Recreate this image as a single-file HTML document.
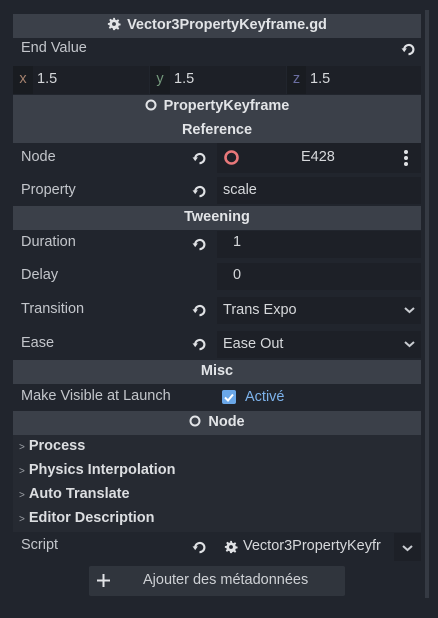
<!DOCTYPE html>
<html><head><meta charset="utf-8"><style>
*{margin:0;padding:0;box-sizing:border-box}
body{width:438px;height:618px;background:#21252d;font-family:"Liberation Sans","DejaVu Sans",sans-serif;font-size:14.5px;color:#cdd0d5;position:relative;overflow:hidden}
.a{position:absolute}
.hdr{position:absolute;left:13px;width:408px;height:24px;background:#3b4049;color:#e2e4e7;font-weight:bold;text-align:center;line-height:23px;font-size:14.5px}
.lbl{position:absolute;left:21px;color:#c3c6cb}
.fld{position:absolute;left:217px;width:204px;background:#1d2027}
.rv{position:absolute;left:192px}
.chev{position:absolute;left:404px}
</style></head><body>
<div class="a" style="left:425px;top:10px;width:4px;height:588px;background:#353a43"></div>

<div class="hdr" style="top:14px"><svg width="14" height="14" viewBox="0 0 16 16" style="vertical-align:-2px;margin-right:6px"><path fill="#e2e4e7" d="M7 1h2l.4 2 1.5.7 1.7-1.2 1.4 1.4-1.2 1.7.7 1.5 2 .4v2l-2 .4-.7 1.5 1.2 1.7-1.4 1.4-1.7-1.2-1.5.7L9 15H7l-.4-2-1.5-.7-1.7 1.2-1.4-1.4 1.2-1.7L2.5 9 1 9V7l2-.4.7-1.5-1.2-1.7 1.4-1.4 1.7 1.2L7.1 3z"/><circle cx="8" cy="8" r="2.2" fill="#3b4049"/></svg>Vector3PropertyKeyframe.gd</div>

<div class="lbl" style="top:40px">End Value</div>
<svg class="a" style="left:401px;top:42px" width="15" height="15" viewBox="0 0 14 14"><path d="M3 6.5A4.3 4.3 0 1 1 7 11.3" fill="none" stroke="#dfe1e4" stroke-width="2"/><path d="M0.5 6l5 0-2.5 3.5z" fill="#dfe1e4"/></svg>

<div class="a" style="left:13px;top:66px;width:136px;height:28px;background:#1d2027"></div>
<div class="a" style="left:13px;top:66px;width:20px;height:28px;background:#191c21;color:#a5826e;line-height:26px;text-align:center">x</div>
<div class="a" style="left:37px;top:66px;line-height:26px;color:#d6d8db">1.5</div>
<div class="a" style="left:150px;top:66px;width:136px;height:28px;background:#1d2027"></div>
<div class="a" style="left:150px;top:66px;width:20px;height:28px;background:#191c21;color:#74987c;line-height:26px;text-align:center">y</div>
<div class="a" style="left:174px;top:66px;line-height:26px;color:#d6d8db">1.5</div>
<div class="a" style="left:287px;top:66px;width:134px;height:28px;background:#1d2027"></div>
<div class="a" style="left:287px;top:66px;width:19px;height:28px;background:#191c21;color:#6b6ea1;line-height:26px;text-align:center">z</div>
<div class="a" style="left:310px;top:66px;line-height:26px;color:#d6d8db">1.5</div>

<div class="hdr" style="top:95px"><svg width="12" height="12" viewBox="0 0 12 12" style="vertical-align:-1px;margin-right:7px"><circle cx="6" cy="6" r="4.5" fill="none" stroke="#e2e4e7" stroke-width="2"/></svg>PropertyKeyframe</div>
<div class="hdr" style="top:119px">Reference</div>

<div class="lbl" style="top:149px">Node</div>
<div class="fld" style="top:143px;height:30px"></div>
<svg class="a" style="left:223px;top:149px" width="17" height="17" viewBox="0 0 17 17"><circle cx="8.5" cy="8.5" r="6" fill="none" stroke="#e8787a" stroke-width="2.6"/></svg>
<div class="a" style="left:301px;top:149px;color:#d6d8db">E428</div>
<svg class="a" style="left:403px;top:149px" width="6" height="18"><circle cx="3" cy="3" r="2" fill="#dfe1e4"/><circle cx="3" cy="9" r="2" fill="#dfe1e4"/><circle cx="3" cy="15" r="2" fill="#dfe1e4"/></svg>

<div class="lbl" style="top:182px">Property</div>
<div class="fld" style="top:177px;height:27px"></div>
<div class="a" style="left:223px;top:182px;color:#d6d8db">scale</div>

<div class="hdr" style="top:206px">Tweening</div>
<div class="lbl" style="top:234px">Duration</div>
<div class="fld" style="top:231px;height:27px"></div>
<div class="a" style="left:233px;top:234px;color:#d6d8db">1</div>
<div class="lbl" style="top:267px">Delay</div>
<div class="fld" style="top:263px;height:27px"></div>
<div class="a" style="left:233px;top:267px;color:#d6d8db">0</div>
<div class="lbl" style="top:301px">Transition</div>
<div class="fld" style="top:297px;height:27px"></div>
<div class="a" style="left:223px;top:302px;color:#d6d8db">Trans Expo</div>
<div class="lbl" style="top:335px">Ease</div>
<div class="fld" style="top:331px;height:27px"></div>
<div class="a" style="left:223px;top:336px;color:#d6d8db">Ease Out</div>

<div class="hdr" style="top:360px">Misc</div>
<div class="lbl" style="top:388px">Make Visible at Launch</div>
<div class="a" style="left:222px;top:390px;width:14px;height:14px;background:#6aa7e8;border-radius:2px"><svg width="14" height="14"><path d="M3 7.5l3 3 5-6" fill="none" stroke="#fff" stroke-width="2"/></svg></div>
<div class="a" style="left:245px;top:389px;color:#7db3ec">Activé</div>

<div class="hdr" style="top:411px"><svg width="12" height="12" viewBox="0 0 12 12" style="vertical-align:-1px;margin-right:7px"><circle cx="6" cy="6" r="4.5" fill="none" stroke="#e2e4e7" stroke-width="2"/></svg>Node</div>
<div class="a" style="left:13px;top:435px;width:408px;height:97px;background:#262a32"></div>
<div class="a" style="left:19px;top:438px;font-weight:bold;color:#dcdee1"><span style="font-size:10px;color:#9ea2a8;font-weight:normal;margin-right:4px">&gt;</span>Process</div>
<div class="a" style="left:19px;top:462px;font-weight:bold;color:#dcdee1"><span style="font-size:10px;color:#9ea2a8;font-weight:normal;margin-right:4px">&gt;</span>Physics Interpolation</div>
<div class="a" style="left:19px;top:486px;font-weight:bold;color:#dcdee1"><span style="font-size:10px;color:#9ea2a8;font-weight:normal;margin-right:4px">&gt;</span>Auto Translate</div>
<div class="a" style="left:19px;top:510px;font-weight:bold;color:#dcdee1"><span style="font-size:10px;color:#9ea2a8;font-weight:normal;margin-right:4px">&gt;</span>Editor Description</div>

<div class="lbl" style="top:537px">Script</div>
<div class="a" style="left:394px;top:533px;width:27px;height:28px;background:#1d2027"></div>
<svg class="a" style="left:224px;top:540px" width="14" height="14" viewBox="0 0 16 16"><path fill="#dfe1e4" d="M7 1h2l.4 2 1.5.7 1.7-1.2 1.4 1.4-1.2 1.7.7 1.5 2 .4v2l-2 .4-.7 1.5 1.2 1.7-1.4 1.4-1.7-1.2-1.5.7L9 15H7l-.4-2-1.5-.7-1.7 1.2-1.4-1.4 1.2-1.7L2.5 9 1 9V7l2-.4.7-1.5-1.2-1.7 1.4-1.4 1.7 1.2L7.1 3z"/><circle cx="8" cy="8" r="2.2" fill="#21252d"/></svg>
<div class="a" style="left:243px;top:538px;color:#d6d8db;width:146px;overflow:hidden;white-space:nowrap">Vector3PropertyKeyfr</div>

<div class="a" style="left:89px;top:566px;width:256px;height:30px;background:#30353d;border-radius:2px"></div>
<svg class="a" style="left:96px;top:573px" width="15" height="15"><path d="M7.5 1v13M1 7.5h13" stroke="#e2e4e7" stroke-width="2"/></svg>
<div class="a" style="left:143px;top:572px;color:#ced1d5">Ajouter des métadonnées</div>

<svg width="0" height="0" style="position:absolute"><defs><g id="rv"><path d="M3 6.5A4.3 4.3 0 1 1 7 11.3" fill="none" stroke="#dfe1e4" stroke-width="2"/><path d="M0.5 6l5 0-2.5 3.5z" fill="#dfe1e4"/></g><path id="ch" d="M1 1l4.5 4 4.5-4" fill="none" stroke="#c9ccd1" stroke-width="2"/></defs></svg>
<svg class="rv" style="top:151px" width="15" height="15" viewBox="0 0 14 14"><use href="#rv"/></svg>
<svg class="rv" style="top:184px" width="15" height="15" viewBox="0 0 14 14"><use href="#rv"/></svg>
<svg class="rv" style="top:237px" width="15" height="15" viewBox="0 0 14 14"><use href="#rv"/></svg>
<svg class="rv" style="top:303px" width="15" height="15" viewBox="0 0 14 14"><use href="#rv"/></svg>
<svg class="rv" style="top:337px" width="15" height="15" viewBox="0 0 14 14"><use href="#rv"/></svg>
<svg class="rv" style="top:540px" width="15" height="15" viewBox="0 0 14 14"><use href="#rv"/></svg>
<svg class="chev" style="top:307px" width="12" height="8"><use href="#ch"/></svg>
<svg class="chev" style="top:341px" width="12" height="8"><use href="#ch"/></svg>
<svg class="a" style="left:402px;top:545px" width="12" height="8"><use href="#ch"/></svg>
</body></html>
